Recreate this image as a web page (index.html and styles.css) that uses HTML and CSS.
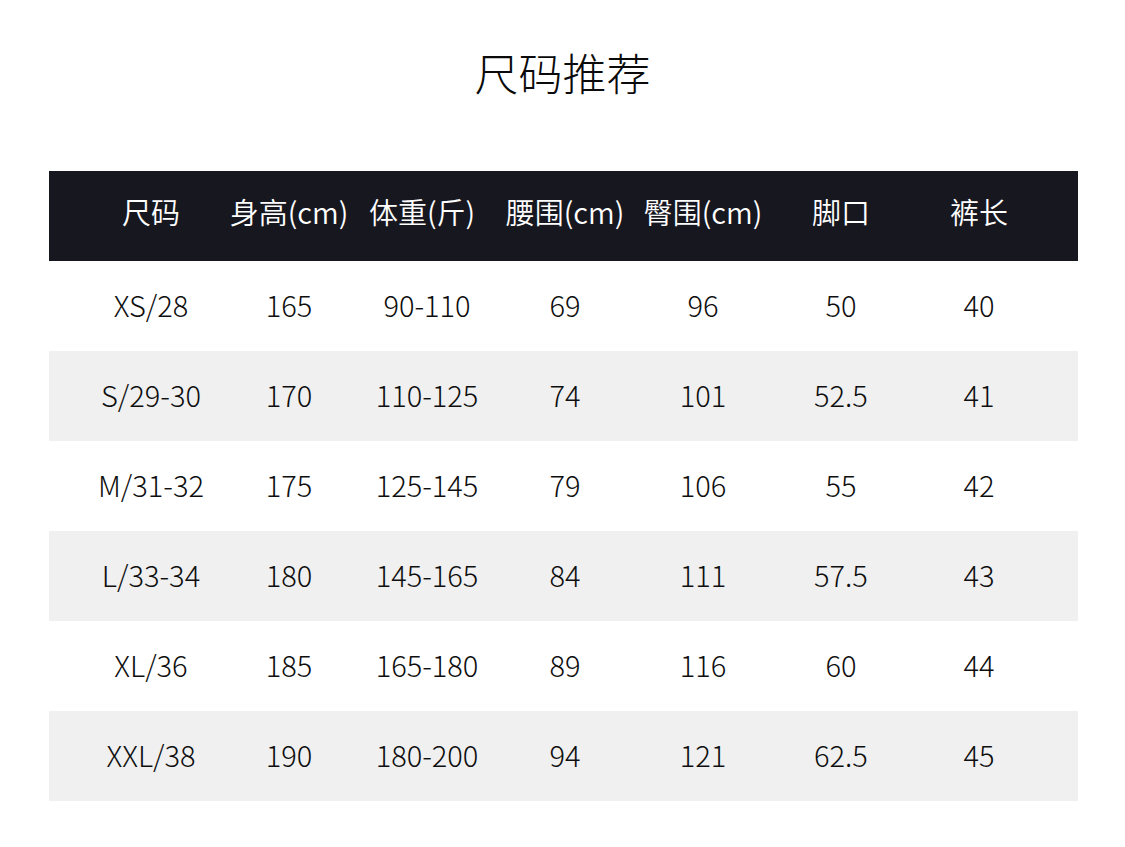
FILE: index.html
```html
<!DOCTYPE html>
<html lang="zh-CN">
<head>
<meta charset="utf-8">
<title>尺码推荐</title>
<link rel="stylesheet" href="styles.css">
</head>
<body>
<div class="page">
  <h1 class="title">尺码推荐</h1>
  <div class="table">
    <div class="row head">
      <div class="cell">尺码</div>
      <div class="cell">身高(cm)</div>
      <div class="cell weight">体重(斤)</div>
      <div class="cell">腰围(cm)</div>
      <div class="cell">臀围(cm)</div>
      <div class="cell">脚口</div>
      <div class="cell">裤长</div>
    </div>
    <div class="row">
      <div class="cell">XS/28</div><div class="cell">165</div><div class="cell">90-110</div><div class="cell">69</div><div class="cell">96</div><div class="cell">50</div><div class="cell">40</div>
    </div>
    <div class="row alt">
      <div class="cell">S/29-30</div><div class="cell">170</div><div class="cell">110-125</div><div class="cell">74</div><div class="cell">101</div><div class="cell">52.5</div><div class="cell">41</div>
    </div>
    <div class="row">
      <div class="cell">M/31-32</div><div class="cell">175</div><div class="cell">125-145</div><div class="cell">79</div><div class="cell">106</div><div class="cell">55</div><div class="cell">42</div>
    </div>
    <div class="row alt">
      <div class="cell">L/33-34</div><div class="cell">180</div><div class="cell">145-165</div><div class="cell">84</div><div class="cell">111</div><div class="cell">57.5</div><div class="cell">43</div>
    </div>
    <div class="row">
      <div class="cell">XL/36</div><div class="cell">185</div><div class="cell">165-180</div><div class="cell">89</div><div class="cell">116</div><div class="cell">60</div><div class="cell">44</div>
    </div>
    <div class="row alt">
      <div class="cell">XXL/38</div><div class="cell">190</div><div class="cell">180-200</div><div class="cell">94</div><div class="cell">121</div><div class="cell">62.5</div><div class="cell">45</div>
    </div>
  </div>
</div>
</body>
</html>
```
FILE: styles.css
```css
* { box-sizing: border-box; }
html, body {
  margin: 0;
  padding: 0;
  background: #ffffff;
}
body {
  font-family: "Noto Sans CJK SC", "Noto Sans", sans-serif;
  font-weight: 300;
  color: #0e0e0e;
}
.page {
  width: 1125px;
  height: 847px;
  overflow: hidden;
}
.title {
  margin: 0;
  padding-top: 42px;
  height: 103px;
  line-height: 60px;
  font-size: 44px;
  font-weight: 300;
  text-align: center;
  color: #0a0a0a;
  margin-bottom: 68px;
}
.table {
  margin-left: 49px;
  width: 1029px;
}
.row {
  display: grid;
  grid-template-columns: repeat(7, 138px);
  padding-left: 33px;
  padding-bottom: 4px;
  height: 90px;
  align-items: center;
  background: #ffffff;
}
.row.alt {
  background: #f0f0f0;
}
.row.head {
  background: #17171f;
  color: #ffffff;
  padding-bottom: 11px;
}
.cell {
  text-align: center;
  white-space: nowrap;
  font-size: 29px;
  line-height: 40px;
}
.head .cell {
  font-weight: 350;
}
.head .weight {
  padding-right: 10px;
}
```
